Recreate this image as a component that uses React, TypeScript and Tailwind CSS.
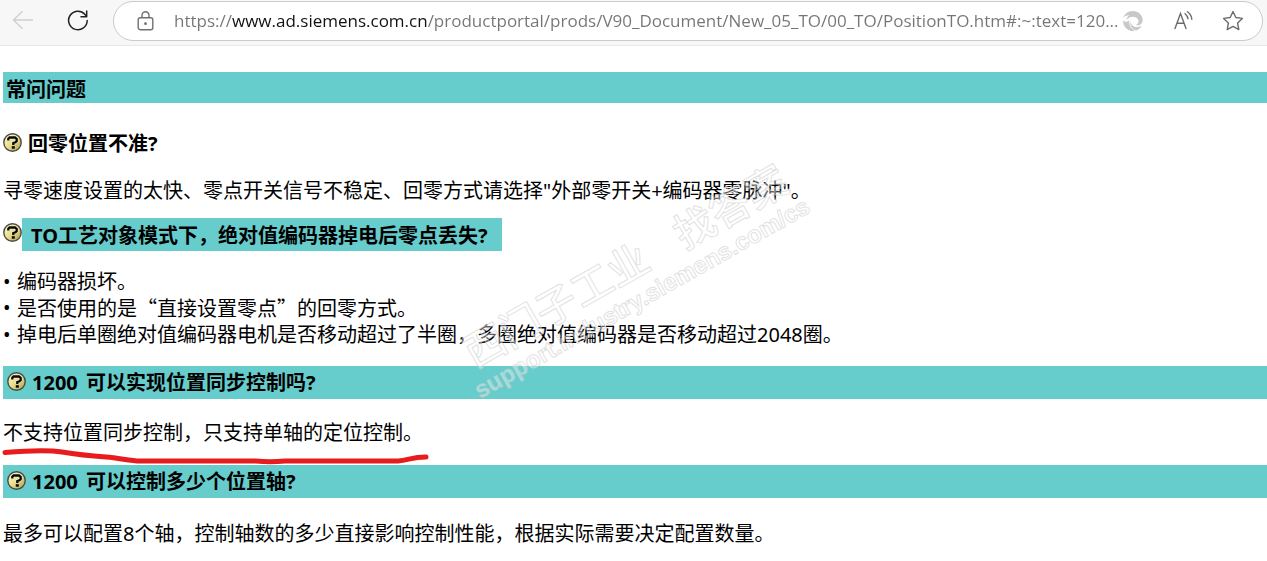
import type { ReactNode } from "react";

const url =
  "https://www.ad.siemens.com.cn/productportal/prods/V90_Document/New_05_TO/00_TO/PositionTO.htm#:~:text=120...";

function QuestionIcon() {
  return (
    <svg viewBox="0 0 19 19" className="mb-1 h-[19px] w-[19px] shrink-0" aria-hidden="true">
      <defs>
        <linearGradient id="coin" x1="0" y1="0" x2="1" y2="1">
          <stop offset="0" stopColor="#fffbd0" />
          <stop offset="0.5" stopColor="#e8de8c" />
          <stop offset="1" stopColor="#a89c48" />
        </linearGradient>
      </defs>
      <circle cx="9.5" cy="9.5" r="8.7" fill="url(#coin)" stroke="#4a4a40" strokeWidth="1.4" />
      <path d="M5.300 7.600V5.800L6.600 4.500H12L13.700 6V8L12.500 9.300L10.300 10V12" fill="none" stroke="#fff" strokeWidth="3.600" opacity="0.5" />
      <path d="M5.300 7.600V5.800L6.600 4.500H12L13.700 6V8L12.500 9.300L10.300 10V12" fill="none" stroke="#080808" strokeWidth="2.300" />
      <rect x="8.800" y="13.200" width="3" height="2.500" fill="#080808" />
    </svg>
  );
}

function Banner({ model, children }: { model: string; children: ReactNode }) {
  return (
    <h2 className="flex h-[33px] items-center gap-[6px] bg-[#66cccc] pl-1 pt-px font-bold">
      <QuestionIcon />
      <span>
        <span className="mr-[3px]">{model}</span> {children}
      </span>
    </h2>
  );
}

function Bullet({ children }: { children: ReactNode }) {
  return (
    <li className="flex">
      <span className="w-[14px] shrink-0">•</span>
      <span>{children}</span>
    </li>
  );
}

function Toolbar() {
  return (
    <header className="flex h-[46px] items-start border-b border-[#e8e8e8] bg-[#f7f7f7] pr-1">
      <button type="button" aria-label="后退" className="ml-3 mt-[10px] h-[22px] w-[22px] text-[#cfcfcf]">
        <svg viewBox="0 0 22 22" fill="none" stroke="currentColor" strokeWidth="1.4">
          <path d="M21 10H1.5M10.5 1.2L1.5 10l9 8.8" />
        </svg>
      </button>
      <button type="button" aria-label="刷新" className="ml-[33px] mt-[9px] h-[22px] w-[22px] text-[#222]">
        <svg viewBox="0 0 22 22" fill="none" stroke="currentColor" strokeWidth="1.5" strokeLinecap="round" strokeLinejoin="round">
          <path d="M20.2 11.5A9.3 9.3 0 1 1 17.8 5.2L19.6 7.6M19.7 2v5.7H14" />
        </svg>
      </button>
      <div className="ml-6 mt-px flex h-10 min-w-0 flex-1 items-center rounded-full border border-[#cbcbcb] bg-white pl-[23px] pr-[18px]">
        <button type="button" aria-label="网站信息" className="h-5 w-[17px] shrink-0 text-[#707070]">
          <svg viewBox="0 0 17 20" fill="none" stroke="currentColor" strokeWidth="1.4">
            <rect x="1.2" y="6.7" width="14.6" height="12" rx="2" />
            <path d="M5 6.7V4.2a3.5 3.5 0 0 1 7 0v2.5" />
            <circle cx="8.5" cy="12.7" r="1.4" fill="currentColor" stroke="none" />
          </svg>
        </button>
        <input
          type="text"
          aria-label="地址栏"
          defaultValue={url}
          spellCheck={false}
          className="ml-5 min-w-0 flex-1 bg-[linear-gradient(90deg,#757575_58px,#111_58px,#111_254px,#757575_254px)] bg-clip-text font-['Open_Sans',sans-serif] text-[17px] leading-6 text-transparent outline-none"
        />
        <div className="flex shrink-0 items-center gap-[28px] text-[#6c6c6c]">
          <button type="button" aria-label="扩展" className="h-[22px] w-[22px] text-[#c8c8c8]">
            <svg viewBox="0 0 22 22" fill="currentColor">
              <path d="M1 8C3 3.300 6.400 1.200 10.500 1c5.800-.1 10.200 4.200 10.200 8.800 0 4.200-3.600 6.600-6.700 5.300 2.700-1.500 3.300-4 1.800-6.100C13.400 5.700 7.600 6.100 4.500 9.800 4.600 7.900 5.700 6.300 7.500 5.300 4.800 5.100 2.600 6.100 1 8z" />
              <path d="M1 10.200c1.500 2.100 4.200 2.100 6.300.2-.6 4 1.300 7.600 5 9.600l-.7 1.100C5.600 21.300.8 16.500 1 10.200z" />
              <path d="M8.700 11c-.1 5.200 5.600 8 11.100 4.600-1.300 2.500-3.200 4.200-5.700 5C10.200 18.900 7.300 15.500 8.700 11z" />
            </svg>
          </button>
          <button type="button" aria-label="大声朗读" className="h-[22px] w-[22px]">
            <svg viewBox="0 0 22 22" fill="none" stroke="currentColor" strokeWidth="1.4" strokeLinecap="round">
              <path d="M3 18.500L8.500 3.500l5.500 15M4.900 13.200h7.200M13 3.700q2.600 2 3 5M15.500 1.800q4 3 4.300 7.500" />
            </svg>
          </button>
          <button type="button" aria-label="收藏" className="h-[22px] w-[22px]">
            <svg viewBox="0 0 22 22" fill="none" stroke="currentColor" strokeWidth="1.4" strokeLinejoin="round">
              <path d="M11 1.500l2.800 6 6.600.9-4.800 4.600 1.200 6.600-5.800-3.200-5.800 3.200 1.200-6.600-4.800-4.600 6.600-.9z" />
            </svg>
          </button>
        </div>
      </div>
    </header>
  );
}

function Watermark() {
  return (
    <svg
      viewBox="0 0 400 260"
      className="pointer-events-none absolute left-[440px] top-[150px] h-[260px] w-[400px] overflow-visible"
      aria-hidden="true"
    >
      <g transform="translate(40 249) rotate(-29.500)" fill="#fff" fillOpacity="0.4" stroke="#c4c4c4" strokeOpacity="0.5" strokeWidth="1">
        <text x="10" y="-29" fontSize="41" fontWeight="500" fontFamily="Noto Sans CJK SC, sans-serif">西门子工业</text>
        <text x="251" y="-29" fontSize="41" fontWeight="500" fontFamily="Noto Sans CJK SC, sans-serif">找答案</text>
        <text x="0" y="0" fontSize="24" fontWeight="700" fontFamily="Liberation Sans, sans-serif">support.industry.siemens.com/cs</text>
      </g>
    </svg>
  );
}

export default function App() {
  return (
    <div lang="zh-CN" className="relative min-h-screen overflow-hidden bg-white font-['Noto_Sans','Noto_Sans_CJK_SC',sans-serif] text-[20px] leading-[26px] text-black">
      <Toolbar />
      <main className="pl-[3px] pt-[26px]">
        <h1 className="flex h-[31px] items-center bg-[#66cccc] pl-[3px] pt-1 font-bold">常问问题</h1>

        <h2 className="mt-[28px] flex items-center gap-[6px] font-bold">
          <QuestionIcon />
          <span>回零位置不准?</span>
        </h2>
        <p className="mt-[21px]">寻零速度设置的太快、零点开关信号不稳定、回零方式请选择"外部零开关+编码器零脉冲"。</p>

        <h2 className="mt-[14px] flex h-[33px] items-center font-bold">
          <QuestionIcon />
          <span className="flex h-full items-center bg-[#66cccc] pl-[9px] pr-[14px] pt-[2px]">TO工艺对象模式下，绝对值编码器掉电后零点丢失?</span>
        </h2>
        <ul className="mt-[18px]">
          <Bullet>编码器损坏。</Bullet>
          <Bullet>
            是否使用的是<span className="font-['Noto_Sans_CJK_SC',sans-serif]">“直接设置零点”</span>的回零方式。
          </Bullet>
          <Bullet>掉电后单圈绝对值编码器电机是否移动超过了半圈，多圈绝对值编码器是否移动超过2048圈。</Bullet>
        </ul>

        <div className="mt-[18px]">
          <Banner model="1200">可以实现位置同步控制吗?</Banner>
        </div>
        <div className="relative mt-[21px]">
          <p>不支持位置同步控制，只支持单轴的定位控制。</p>
          <svg viewBox="0 0 430 18" className="absolute left-[-3px] top-[27px] h-[18px] w-[430px]" fill="none" aria-hidden="true">
            <path d="M5 5.500C28 3.500 50 3 62 5C80 8 92 9 106 10C120 11 130 14 140 14L256 14Q270 15.500 285 14H398C409 13 412 10 426 10" stroke="#e81c1c" strokeWidth="5" strokeLinecap="round" strokeLinejoin="round" />
          </svg>
        </div>
        <div className="mt-[19px]">
          <Banner model="1200">可以控制多少个位置轴?</Banner>
        </div>
        <p className="mt-[23px]">最多可以配置8个轴，控制轴数的多少直接影响控制性能，根据实际需要决定配置数量。</p>
      </main>
      <Watermark />
    </div>
  );
}
